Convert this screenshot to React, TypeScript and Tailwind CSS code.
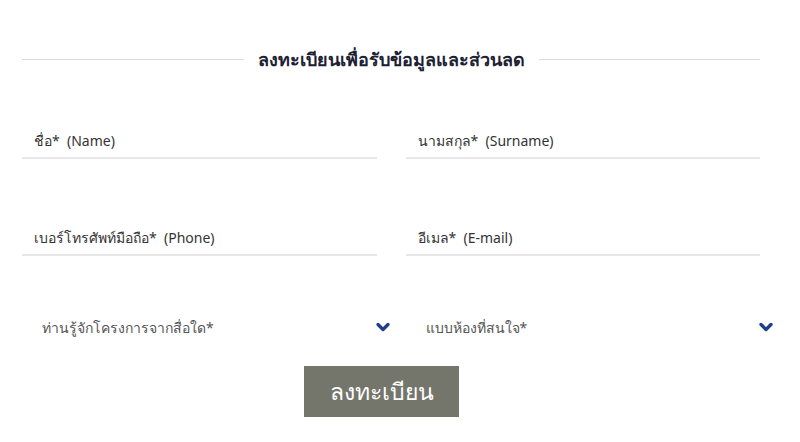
import { ChevronDown } from 'lucide-react';

const font = { fontFamily: '"Noto Sans", "Liberation Sans", sans-serif' };

function Field({ label }: { label: string }) {
    return (
        <div className="border-b-2 border-[#e8e8e8] h-[46px] flex items-end pb-[6px] pl-[12px]">
            <span className="text-[14px] text-[#333] whitespace-pre">{label}</span>
        </div>
    );
}

function Select({ label }: { label: string }) {
    return (
        <div className="h-[46px] flex items-center justify-between pl-[20px] pr-0">
            <span className="text-[14px] text-[#555]">{label}</span>
            <ChevronDown className="w-[20px] h-[20px] text-[#1e3f8a] -mr-[16px]" strokeWidth={4} />
        </div>
    );
}

export default function App() {
    return (
        <div className="w-[800px] h-[442px] bg-white" style={font}>
            <div className="pt-[46px] px-[22px] w-[760px]">
                <div className="flex items-center gap-[14px] w-[738px]">
                    <div className="flex-1 h-px bg-[#d5dbe3]" />
                    <h2 className="text-[18px] font-semibold text-[#1d2233]">ลงทะเบียนเพื่อรับข้อมูลและส่วนลด</h2>
                    <div className="flex-1 h-px bg-[#d5dbe3]" />
                </div>
                <div className="grid grid-cols-2 gap-x-[29px] mt-[40px] w-[738px]">
                    <Field label="ชื่อ*  (Name)" />
                    <Field label="นามสกุล*  (Surname)" />
                </div>
                <div className="grid grid-cols-2 gap-x-[29px] mt-[51px] w-[738px]">
                    <Field label="เบอร์โทรศัพท์มือถือ*  (Phone)" />
                    <Field label="อีเมล*  (E-mail)" />
                </div>
                <div className="grid grid-cols-2 gap-x-[29px] mt-[48px] w-[738px]">
                    <Select label="ท่านรู้จักโครงการจากสื่อใด*" />
                    <Select label="แบบห้องที่สนใจ*" />
                </div>
                <div className="flex mt-[16px] w-[738px]">
                    <button className="w-[155px] h-[51px] bg-[#74766b] text-white text-[23px] font-normal ml-[282px]">ลงทะเบียน</button>
                </div>
            </div>
        </div>
    );
}
